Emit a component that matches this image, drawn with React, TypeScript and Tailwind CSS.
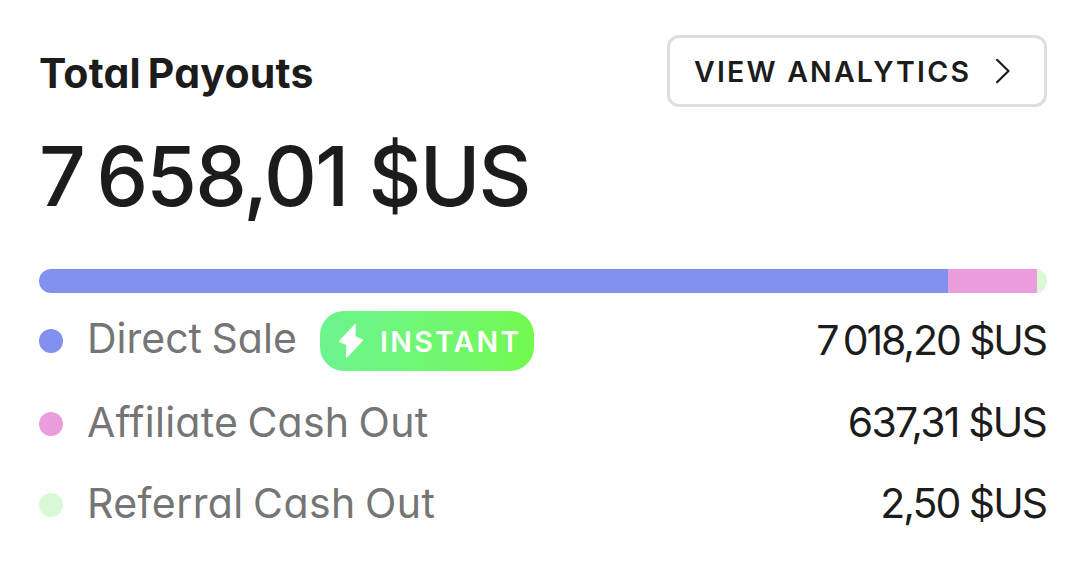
import React from "react";

type Row = {
  label: string;
  amount: string;
  dot: string;
  height: string;
  labelStyle: string;
  amountStyle: string;
  instant?: boolean;
};

const rows: Row[] = [
  {
    label: "Direct Sale",
    amount: "7\u202f018,20 $US",
    dot: "bg-[#8290ee]",
    height: "h-[60px]",
    labelStyle: "w-[209px] tracking-[0px] [word-spacing:-2px] -mt-[6px]",
    amountStyle: "tracking-[-2.1px] -mt-[2px]",
    instant: true,
  },
  {
    label: "Affiliate Cash Out",
    amount: "637,31 $US",
    dot: "bg-[#eb9cdc]",
    height: "h-[60px] mt-[23px]",
    labelStyle: "tracking-[0.25px] [word-spacing:-2.5px] -mt-[4px]",
    amountStyle: "tracking-[-1.8px] -mt-[4px]",
  },
  {
    label: "Referral Cash Out",
    amount: "2,50 $US",
    dot: "bg-[#d9f8d5]",
    height: "h-[60px] mt-[21px]",
    labelStyle: "tracking-[0.4px] [word-spacing:-2.5px] -mt-[4px]",
    amountStyle: "tracking-[-2px] -mt-[4px]",
  },
];

function InstantBadge() {
  return (
    <span className="ml-[24px] flex h-[60px] w-[214px] shrink-0 items-center rounded-[24px] bg-gradient-to-r from-[#6cf48f] to-[#72f94e] pl-[18px] text-white">
      <svg width="26" height="36" viewBox="0 0 26 36" fill="currentColor" stroke="currentColor" strokeWidth="1.6" strokeLinejoin="round" className="shrink-0">
        <path d="M17.2 1.8 1.8 18.2l7.4 3.4L8.6 34 24.4 17.2l-7.8-3.4Z" />
      </svg>
      <span className="mt-px ml-[16px] text-[28.5px] leading-[36px] font-semibold tracking-[2.3px]">INSTANT</span>
    </span>
  );
}

export default function App() {
  return (
    <main className="flex h-[568px] w-[1086px] flex-col bg-white pt-[35px] pr-[39px] pl-[39px] font-['Inter',sans-serif] whitespace-nowrap text-[#1c1c1c] [font-feature-settings:'cv11']">
      <header className="flex h-[72px] items-center justify-between">
        <h2 className="mt-[4px] text-[41px] leading-[60px] font-[650] tracking-[0.2px] [word-spacing:-3px]">Total Payouts</h2>
        <button className="flex h-[72px] w-[380px] items-center rounded-[12px] border-[3px] border-[#dedede] pl-[24px]">
          <span className="mt-[2px] w-[279px] text-left text-[28.5px] leading-[40px] font-semibold tracking-[2.2px]">VIEW ANALYTICS</span>
          <svg width="16" height="26" viewBox="0 0 16 26" fill="none" stroke="currentColor" strokeWidth="2.2" strokeLinecap="round" strokeLinejoin="round" className="ml-[22px]">
            <path d="M2 1.8 13.5 13 2 24.2" />
          </svg>
        </button>
      </header>
      <p className="mt-[20px] h-[100px] text-[82px] leading-[100px] font-medium tracking-[-1.8px] [word-spacing:1px]">7{"\u202f"}658,01 $US</p>
      <div className="mt-[42px] flex h-[24px] w-[1008px] shrink-0 overflow-hidden rounded-full">
        <div className="w-[909px] bg-[#8290ee]" />
        <div className="w-[89px] bg-[#eb9cdc]" />
        <div className="flex-1 bg-[#d9f8d5]" />
      </div>
      <ul className="mt-[18px] w-[1008px] pr-px">
        {rows.map((row) => (
          <li key={row.label} className={`flex items-center text-[41px] leading-[50px] ${row.height}`}>
            <span className={`size-[24px] shrink-0 rounded-full ${row.dot}`} />
            <span className={`ml-[24px] text-[#757575] ${row.labelStyle}`}>{row.label}</span>
            {row.instant && <InstantBadge />}
            <span className={`ml-auto ${row.amountStyle}`}>{row.amount}</span>
          </li>
        ))}
      </ul>
    </main>
  );
}
